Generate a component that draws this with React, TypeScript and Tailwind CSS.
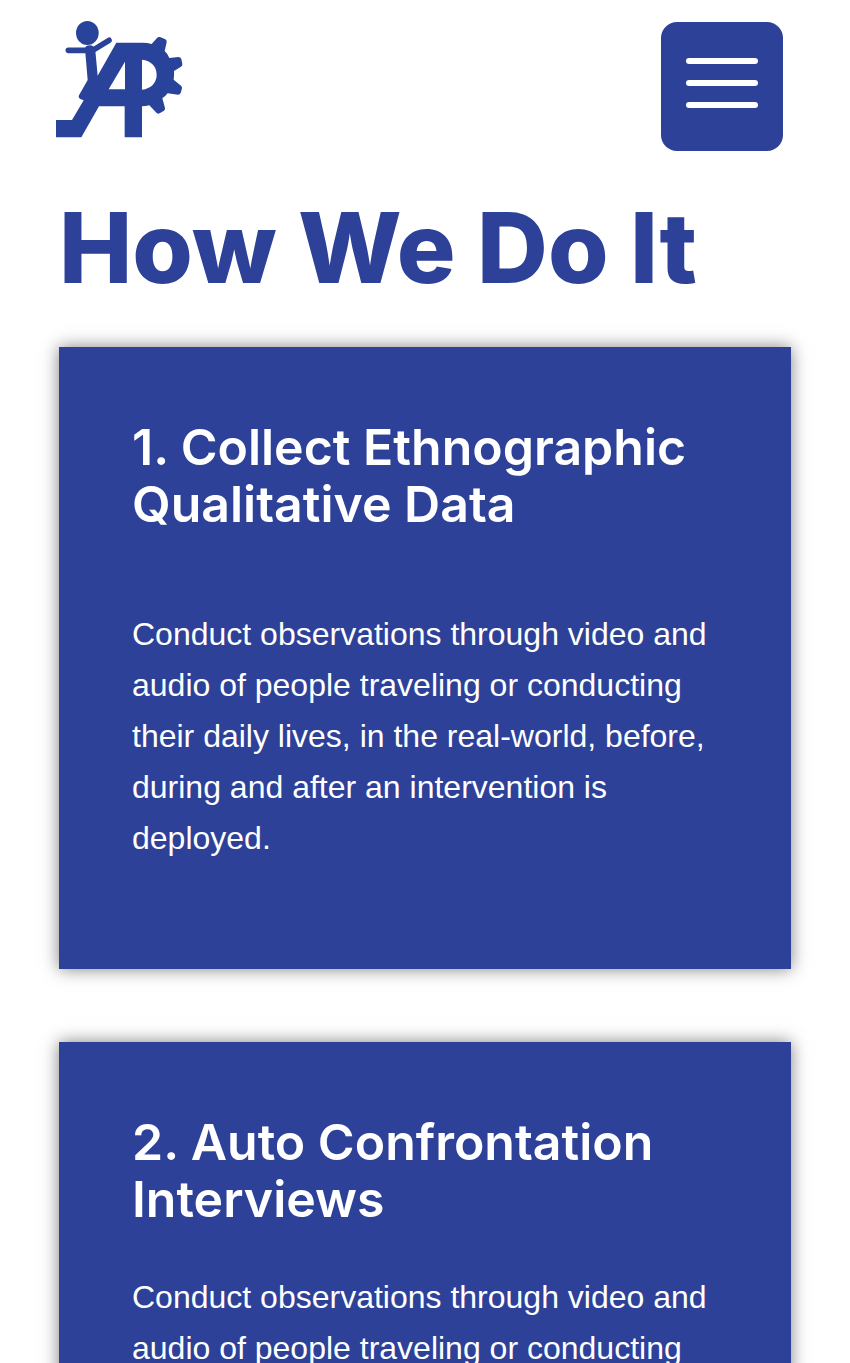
type Step = {
  title: string;
  body: string;
  bodyGap: string;
};

const steps: Step[] = [
  {
    title: "1. Collect Ethnographic Qualitative Data",
    body: "Conduct observations through video and audio of people traveling or conducting their daily lives, in the real-world, before, during and after an intervention is deployed.",
    bodyGap: "mt-[76px]",
  },
  {
    title: "2. Auto Confrontation Interviews",
    body: "Conduct observations through video and audio of people traveling or conducting their daily lives, in the real-world, before, during and after an intervention is deployed.",
    bodyGap: "mt-[44px]",
  },
];

function Logo() {
  return (
    <svg viewBox="33 30 381 354" className="w-[127px] h-[118px]" fill="#29439a" aria-hidden="true">
      <ellipse cx="127" cy="69" rx="34" ry="36" />
      <path d="M70 121 H130 L148 118 L192 91" fill="none" stroke="#29439a" strokeWidth="17" strokeLinecap="round" strokeLinejoin="round" />
      <path d="M120 116 Q122 106 134 106 Q148 106 151 122 L158 197 L214 98 H292 Q308 98 320 102 L336 84 Q341 79 347 82 L361 88 Q366 91 365 97 L359 123 Q368 131 373 144 L400 141 Q407 141 409 147 L412 162 Q413 167 408 170 L387 183 Q388 197 386 209 L408 227 Q412 230 411 235 L407 249 Q405 254 399 254 L368 250 Q361 259 352 265 L360 294 Q361 299 357 302 L344 310 Q339 313 335 309 L313 286 Q302 289 291 289 V382 H239 V289 H162 L109 382 H33 V330 H81 L116 271 L106 267 Q99 263 102 256 L128 210 Z M240 155 L191 238 H240 Z M291 149 V239 C318 236 335 218 335 194 C335 169 318 152 291 149 Z" fillRule="evenodd" />
    </svg>
  );
}

function Header() {
  return (
    <header className="flex items-start justify-between pl-14 pr-[67px] pt-5">
      <a href="#home" aria-label="Home">
        <Logo />
      </a>
      <button
        type="button"
        aria-label="Open menu"
        className="mt-[2px] flex h-[129px] w-[122px] flex-col items-center gap-4 rounded-2xl bg-[#2d4199] pt-9"
      >
        <span className="h-[6px] w-[72px] rounded-full bg-white" />
        <span className="h-[6px] w-[72px] rounded-full bg-white" />
        <span className="h-[6px] w-[72px] rounded-full bg-white" />
      </button>
    </header>
  );
}

function StepCard({ title, body, bodyGap }: Step) {
  return (
    <article className="bg-[#2d4199] px-[73px] pt-[72px] pb-[105px] text-white shadow-[0_0_16px_rgba(0,0,0,0.5)]">
      <h2 className="font-['Inter',sans-serif] text-[50px] leading-[57px] font-semibold">{title}</h2>
      <p className={`${bodyGap} font-['Liberation_Sans',Arial,sans-serif] text-[32px] leading-[51px]`}>{body}</p>
    </article>
  );
}

export default function App() {
  return (
    <div className="min-h-screen bg-white">
      <Header />
      <main className="px-[59px] pb-[73px]">
        <h1 className="mt-[37px] font-['Inter',sans-serif] text-[98px] leading-[120px] font-extrabold text-[#2d4199]">
          How We Do It
        </h1>
        <div className="mt-[39px] flex flex-col gap-[73px]">
          {steps.map((step) => (
            <StepCard key={step.title} {...step} />
          ))}
        </div>
      </main>
    </div>
  );
}
